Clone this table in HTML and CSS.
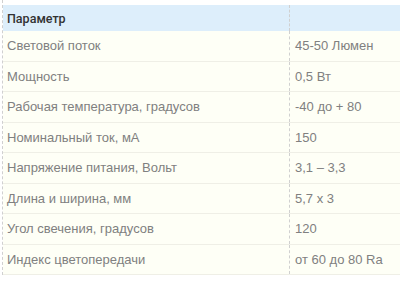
FILE: index.html
```html
<!DOCTYPE html>
<html>
<head>
<meta charset="utf-8">
<link rel="stylesheet" href="styles.css">
</head>
<body>
<div class="wrap">
<table class="specs">
<thead>
<tr><th class="c1">Параметр</th><th class="c2"></th></tr>
</thead>
<tbody>
<tr><td class="c1">Световой поток</td><td class="c2">45-50 Люмен</td></tr>
<tr><td class="c1">Мощность</td><td class="c2">0,5 Вт</td></tr>
<tr><td class="c1">Рабочая температура, градусов</td><td class="c2">-40 до + 80</td></tr>
<tr><td class="c1">Номинальный ток, мА</td><td class="c2">150</td></tr>
<tr><td class="c1">Напряжение питания, Вольт</td><td class="c2">3,1 – 3,3</td></tr>
<tr><td class="c1">Длина и ширина, мм</td><td class="c2">5,7 х 3</td></tr>
<tr><td class="c1">Угол свечения, градусов</td><td class="c2">120</td></tr>
<tr><td class="c1">Индекс цветопередачи</td><td class="c2">от 60 до 80 Ra</td></tr>
</tbody>
</table>
</div>
</body>
</html>
```
FILE: styles.css
```css
html, body { margin: 0; padding: 0; background: #fff; overflow: hidden; }
.wrap {
  margin-left: 2px;
  padding-top: 5px;
  border-left: 1px dashed #d0d0d0;
}
.specs {
  border-collapse: collapse;
  width: 100%;
  font-family: "Liberation Sans", Arial, sans-serif;
  font-size: 13px;
}
.specs th {
  background: #ddeefb;
  color: #333;
  font-family: Roboto, sans-serif;
  font-weight: 500;
  font-size: 12.5px;
  text-align: left;
  height: 26px;
  padding: 0 4px;
  box-sizing: border-box;
}
.specs td {
  background: #fefff6;
  color: #808080;
  height: 29.5px;
  padding: 0 4px;
  border-bottom: 1px solid #efefe6;
}
.specs .c1 { width: 278px; }
.specs .c2 { border-left: 1px dashed #d0d0d0; padding-left: 5px; }
```
